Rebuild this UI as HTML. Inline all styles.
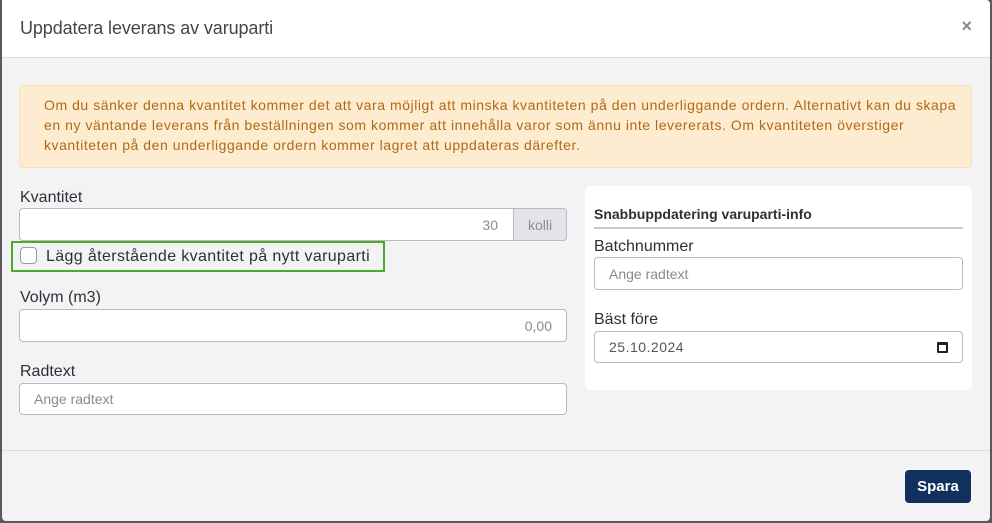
<!DOCTYPE html>
<html><head><meta charset="utf-8"><style>
*{box-sizing:border-box;margin:0;padding:0}
body{width:992px;height:523px;background:#5a5a5a;font-family:"Liberation Sans",sans-serif;position:relative;overflow:hidden}
.modal{position:absolute;left:2px;top:0;width:988px;height:521px;background:#f3f3f5;border-radius:0 4px 4px 4px;overflow:hidden}
.hdr{position:absolute;left:0;top:0;width:100%;height:58px;background:#fff;border-bottom:1px solid #dcdcdf}
.title{position:absolute;left:18px;top:18px;font-size:18px;color:#45454b;letter-spacing:-.1px}
.x{position:absolute;right:18px;top:16px;font-size:18px;color:#888;font-weight:bold}
.alert{position:absolute;left:17px;top:85px;width:953px;height:83px;background:#fdeccf;border:1px solid #f7e0b5;border-radius:4px;padding:9px 24px;color:#b06a17;font-size:14px;line-height:20px;letter-spacing:.55px;white-space:nowrap}
.a{position:absolute;color:#2f2f35;font-size:16px}
.in{position:absolute;background:#fff;border:1px solid #b9b9c0;border-radius:4px;font-size:14px;color:#8a8a95;padding:0 14px;display:flex;align-items:center}
.r{justify-content:flex-end}
.card{position:absolute;left:583px;top:186px;width:387px;height:204px;background:#fff;border-radius:5px}
.btn{position:absolute;left:903px;top:470px;width:66px;height:33px;background:#12305e;border-radius:4px;color:#fff;font-size:15px;font-weight:bold;display:flex;align-items:center;justify-content:center}
</style></head><body>
<div class="modal">
<div class="hdr"><div class="title">Uppdatera leverans av varuparti</div><div class="x">×</div></div>
<div class="alert">Om du sänker denna kvantitet kommer det att vara möjligt att minska kvantiteten på den underliggande ordern. Alternativt kan du skapa<br>en ny väntande leverans från beställningen som kommer att innehålla varor som ännu inte levererats. Om kvantiteten överstiger<br>kvantiteten på den underliggande ordern kommer lagret att uppdateras därefter.</div>
<div class="a" style="left:18px;top:189px">Kvantitet</div>
<div class="in r" style="left:17px;top:208px;width:548px;height:33px;padding-right:68px">30</div>
<div style="position:absolute;left:511px;top:208px;width:54px;height:33px;background:#e4e4e8;border:1px solid #b9b9c0;border-radius:0 4px 4px 0;color:#8a8a95;font-size:14px;display:flex;align-items:center;justify-content:center">kolli</div>
<div style="position:absolute;left:9px;top:241px;width:374px;height:31px;border:2px solid #4caa2a"></div>
<div style="position:absolute;left:18px;top:247px;width:17px;height:17px;border:1px solid #9a9aa2;border-radius:4px;background:#fff"></div>
<div class="a" style="left:44px;top:248px;letter-spacing:.37px">Lägg återstående kvantitet på nytt varuparti</div>
<div class="a" style="left:18px;top:289px">Volym (m3)</div>
<div class="in r" style="left:17px;top:309px;width:548px;height:33px">0,00</div>
<div class="a" style="left:18px;top:363px">Radtext</div>
<div class="in" style="left:17px;top:383px;width:548px;height:32px">Ange radtext</div>
<div class="card"></div>
<div style="position:absolute;left:592px;top:206px;font-size:14px;font-weight:bold;color:#2f2f35">Snabbuppdatering varuparti-info</div>
<div style="position:absolute;left:592px;top:227px;width:369px;height:2px;background:#c9cbd0"></div>
<div class="a" style="left:592px;top:238px">Batchnummer</div>
<div class="in" style="left:592px;top:257px;width:369px;height:33px">Ange radtext</div>
<div class="a" style="left:592px;top:311px">Bäst före</div>
<div class="in" style="left:592px;top:331px;width:369px;height:32px;color:#555;letter-spacing:.5px">25.10.2024<span style="margin-left:auto;width:11px;height:11px;border:2px solid #222;border-top-width:3px;border-radius:1px"></span></div>
<div style="position:absolute;left:0;top:450px;width:100%;height:1px;background:#dcdcdf"></div>
<div class="btn">Spara</div>
</div>
</body></html>
